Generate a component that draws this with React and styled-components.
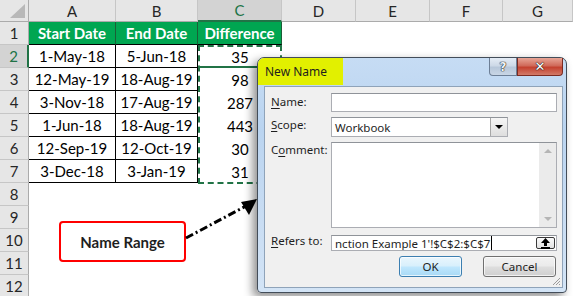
import React from 'react';
import styled, { createGlobalStyle } from 'styled-components';

const GlobalStyle = createGlobalStyle`
  html, body { margin: 0; padding: 0; background: #fff; }
  body { overflow: hidden; }
`;

const Screen = styled.div`
  position: relative;
  width: 573px;
  height: 296px;
  overflow: hidden;
  background: #fff;
  font-family: Lato, "Liberation Sans", sans-serif;
`;

const Sheet = styled.div`
  display: grid;
  grid-template-columns: 29px 87px 82px 84px 74px 74px 73px 70px;
  grid-template-rows: 22px repeat(12, 23px);
`;

const Corner = styled.div`
  position: relative;
  background: #e6e6e6;
  border-right: 1px solid #ababab;
  border-bottom: 1px solid #ababab;
  box-sizing: border-box;

  &::after {
    content: '';
    position: absolute;
    right: 3px;
    bottom: 3px;
    width: 0;
    height: 0;
    border-left: 15px solid transparent;
    border-bottom: 14px solid #b8b8b8;
  }
`;

const ColHead = styled.div`
  box-sizing: border-box;
  display: flex;
  align-items: center;
  justify-content: center;
  font-size: 15px;
  color: ${(p) => (p.$active ? '#217346' : '#262626')};
  background: ${(p) => (p.$active ? '#d3d3d3' : '#e6e6e6')};
  border-right: 1px solid #c6c6c6;
  border-bottom: ${(p) => (p.$active ? '2px solid #217346' : '1px solid #ababab')};
`;

const RowHead = styled.div`
  box-sizing: border-box;
  display: flex;
  align-items: center;
  justify-content: center;
  font-size: 15px;
  color: ${(p) => (p.$active ? '#217346' : '#262626')};
  background: ${(p) => (p.$active ? '#d3d3d3' : '#e6e6e6')};
  border-bottom: 1px solid #c6c6c6;
  border-right: ${(p) => (p.$active ? '2px solid #217346' : '1px solid #ababab')};
`;

const Cell = styled.div`
  box-sizing: border-box;
  display: flex;
  align-items: center;
  justify-content: center;
  font-size: 15px;
  color: #000;
  background: #fff;
  ${(p) => p.$lined && 'border-right: 1px solid #000; border-bottom: 1px solid #000;'}
  ${(p) => p.$active && 'box-shadow: inset 0 -2px 0 #217346;'}
`;

const HeadCell = styled(Cell)`
  background: #00a651;
  color: #fff;
  font-weight: 700;
  border-right: 1px solid #1b5e36;
  border-bottom: 1px solid #000;
`;

const CopyRange = styled.div`
  position: absolute;
  left: 198px;
  top: 45px;
  width: 84px;
  height: 139px;
  box-sizing: border-box;
  border: 2px dashed #217346;
  pointer-events: none;
`;

const Callout = styled.div`
  position: absolute;
  left: 59px;
  top: 221px;
  width: 127px;
  height: 41px;
  box-sizing: border-box;
  border: 2px solid #ff0000;
  border-radius: 4px;
  background: #fff;
  display: flex;
  align-items: center;
  justify-content: center;
  font-size: 15px;
  font-weight: 700;
  color: #1e1e1e;
`;

const Pointer = styled.svg`
  position: absolute;
  left: 180px;
  top: 190px;
  overflow: visible;
`;

const Dialog = styled.div`
  position: absolute;
  left: 257px;
  top: 57px;
  width: 310px;
  height: 236px;
  box-sizing: border-box;
  border: 1px solid #434d59;
  border-radius: 7px 7px 4px 4px;
  background: linear-gradient(180deg, #c6dcf4 0%, #bad4f0 30%, #c9ddf3 70%, #d3e4f6 100%);
  box-shadow: -4px 4px 10px rgba(0, 0, 0, 0.45);
  display: flex;
  flex-direction: column;
  padding: 0 3px 4px 6px;
  font-family: "Noto Sans", "Open Sans", sans-serif;
  font-size: 11.5px;
  color: #1e1e1e;
`;

const TitleBar = styled.div`
  display: flex;
  align-items: flex-start;
  height: 28px;
  margin-left: -6px;
`;

const Title = styled.div`
  width: 85px;
  height: 27px;
  box-sizing: border-box;
  padding-left: 7px;
  line-height: 27px;
  font-size: 12px;
  background: #e2f000;
  border-top-left-radius: 6px;
`;

const Caption = styled.div`
  margin-left: auto;
  display: flex;
`;

const CapButton = styled.div`
  box-sizing: border-box;
  width: ${(p) => (p.$close ? 46 : 28)}px;
  height: 18px;
  display: flex;
  align-items: center;
  justify-content: center;
  font-family: "DejaVu Sans", sans-serif;
  font-weight: 700;
  font-size: ${(p) => (p.$close ? 13 : 12)}px;
  color: ${(p) => (p.$close ? '#fff' : '#eef3f8')};
  text-shadow: 0 0 1px #222, 0 0 1px #222, 0 0 1px #222;
  border: 1px solid ${(p) => (p.$close ? '#7b2b22' : '#6d7f96')};
  border-top: none;
  border-radius: ${(p) => (p.$close ? '0 0 4px 0' : '0 0 0 4px')};
  background: ${(p) =>
    p.$close
      ? 'linear-gradient(180deg, #e8a596 0%, #d06a5a 45%, #c4412f 55%, #d27a68 100%)'
      : 'linear-gradient(180deg, #e4ecf5 0%, #cdd9e7 45%, #b7c7da 55%, #c9d6e5 100%)'};
`;

const Body = styled.div`
  flex: 1;
  background: #f0f0f0;
  border: 1px solid #8fa3b9;
  padding: 6px 5px 0 6px;
  display: grid;
  grid-template-columns: 60px 1fr;
  grid-template-rows: 19px 20px 86px 18px 21px;
  row-gap: 5px;
  position: relative;
`;

const Label = styled.div`
  padding-top: ${(p) => p.$top || 0}px;
  line-height: 15px;

  u { text-decoration: underline; text-underline-offset: 2px; }
`;

const Field = styled.div`
  box-sizing: border-box;
  width: ${(p) => p.$width || 'auto'};
  background: #fff;
  border: 1px solid #abadb3;
  border-top-color: #8f9399;
  display: flex;
  align-items: center;
  position: relative;
  padding-left: 3px;
  white-space: nowrap;
  overflow: hidden;
  margin-top: ${(p) => p.$mt || 0}px;
`;

const DropButton = styled.div`
  margin-left: auto;
  width: 17px;
  height: 100%;
  box-sizing: border-box;
  border-left: 1px solid #a7a7a7;
  background: linear-gradient(180deg, #f6f6f6, #dedede);
  display: flex;
  align-items: center;
  justify-content: center;

  &::after {
    content: '';
    border-left: 4px solid transparent;
    border-right: 4px solid transparent;
    border-top: 4px solid #000;
  }
`;

const ScrollBar = styled.div`
  margin-left: auto;
  align-self: stretch;
  width: 17px;
  background: #ebebeb;
  display: flex;
  flex-direction: column;
  justify-content: space-between;
  align-items: center;
  padding: 6px 0;
  box-sizing: border-box;
`;

const Arrow = styled.div`
  border-left: 4px solid transparent;
  border-right: 4px solid transparent;
  ${(p) => (p.$down ? 'border-top: 4px solid #b5b5b5;' : 'border-bottom: 4px solid #b5b5b5;')}
`;

const Caret = styled.span`
  display: inline-block;
  width: 1px;
  height: 14px;
  background: #000;
  margin-left: 1px;
`;

const CollapseButton = styled.div`
  position: absolute;
  right: 1px;
  top: 1px;
  bottom: 1px;
  width: 19px;
  box-sizing: border-box;
  border: 1px solid #3a3a3a;
  border-radius: 2px;
  background: linear-gradient(180deg, #fafafa, #e2e2e2);
  display: flex;
  align-items: center;
  justify-content: center;
`;

const Buttons = styled.div`
  grid-column: 2;
  display: flex;
  justify-content: flex-end;
  gap: 21px;
  padding-right: 1px;
`;

const PushButton = styled.div`
  box-sizing: border-box;
  width: ${(p) => p.$width}px;
  height: 21px;
  border-radius: 3px;
  display: flex;
  align-items: center;
  justify-content: center;
  border: 1px solid ${(p) => (p.$default ? '#3c7fb1' : '#707070')};
  background: ${(p) =>
    p.$default
      ? 'linear-gradient(180deg, #eaf6fd 0%, #d9f0fc 45%, #bee6fd 55%, #a7d9f5 100%)'
      : 'linear-gradient(180deg, #f2f2f2 0%, #ebebeb 45%, #dddddd 55%, #cfcfcf 100%)'};
  box-shadow: inset 0 0 0 1px rgba(255, 255, 255, 0.7);
`;

const Grip = styled.svg`
  position: absolute;
  right: 1px;
  bottom: 1px;
`;

const dates = [
  ['1-May-18', '5-Jun-18', 35],
  ['12-May-19', '18-Aug-19', 98],
  ['3-Nov-18', '17-Aug-19', 287],
  ['1-Jun-18', '18-Aug-19', 443],
  ['12-Sep-19', '12-Oct-19', 30],
  ['3-Dec-18', '3-Jan-19', 31],
];

const columns = ['A', 'B', 'C', 'D', 'E', 'F', 'G'];

const Blanks = ({ n }) => Array.from({ length: n }, (_, i) => <Cell key={i} />);

const App = () => {
  return (
    <Screen>
      <GlobalStyle />
      <Sheet>
        <Corner />
        {columns.map((c) => (
          <ColHead key={c} $active={c === 'C'}>{c}</ColHead>
        ))}

        <RowHead>1</RowHead>
        <HeadCell>Start Date</HeadCell>
        <HeadCell>End Date</HeadCell>
        <HeadCell>Difference</HeadCell>
        <Blanks n={4} />

        {dates.map(([start, end, diff], i) => (
          <React.Fragment key={start}>
            <RowHead $active={i === 0}>{i + 2}</RowHead>
            <Cell $lined>{start}</Cell>
            <Cell $lined>{end}</Cell>
            <Cell $active={i === 0}>{diff}</Cell>
            <Blanks n={4} />
          </React.Fragment>
        ))}

        {[8, 9, 10, 11, 12].map((r) => (
          <React.Fragment key={r}>
            <RowHead>{r}</RowHead>
            <Blanks n={7} />
          </React.Fragment>
        ))}
      </Sheet>

      <CopyRange />

      <Callout>Name Range</Callout>
      <Pointer width="80" height="60" viewBox="0 0 80 60">
        <line x1="6" y1="48" x2="66" y2="16" stroke="#000" strokeWidth="3" strokeDasharray="8 3 2 3" />
        <polygon points="77,9 61,12 69,25" fill="#000" />
      </Pointer>

      <Dialog>
        <TitleBar>
          <Title>New Name</Title>
          <Caption>
            <CapButton>?</CapButton>
            <CapButton $close>✕</CapButton>
          </Caption>
        </TitleBar>
        <Body>
          <Label $top={1}><u>N</u>ame:</Label>
          <Field />

          <Label><u>S</u>cope:</Label>
          <Field $width="177px">
            Workbook
            <DropButton />
          </Field>

          <Label $top={0}>C<u>o</u>mment:</Label>
          <Field>
            <ScrollBar>
              <Arrow />
              <Arrow $down />
            </ScrollBar>
          </Field>

          <Label $top={0}><u>R</u>efers to:</Label>
          <Field $mt={2}>
            nction Example 1'!$C$2:$C$7<Caret />
            <CollapseButton>
              <svg width="11" height="11" viewBox="0 0 11 11">
                <polygon points="5.5,0 10,5 7,5 7,8 4,8 4,5 1,5" fill="#000" />
                <rect x="1" y="9" width="9" height="2" fill="#000" />
              </svg>
            </CollapseButton>
          </Field>

          <Buttons>
            <PushButton $default $width={63}>OK</PushButton>
            <PushButton $width={73}>Cancel</PushButton>
          </Buttons>

          <Grip width="9" height="9" viewBox="0 0 9 9">
            <path d="M8 1 L1 8 M8 4 L4 8 M8 7 L7 8" stroke="#9a9a9a" strokeWidth="1" />
          </Grip>
        </Body>
      </Dialog>
    </Screen>
  );
};

export default App;
